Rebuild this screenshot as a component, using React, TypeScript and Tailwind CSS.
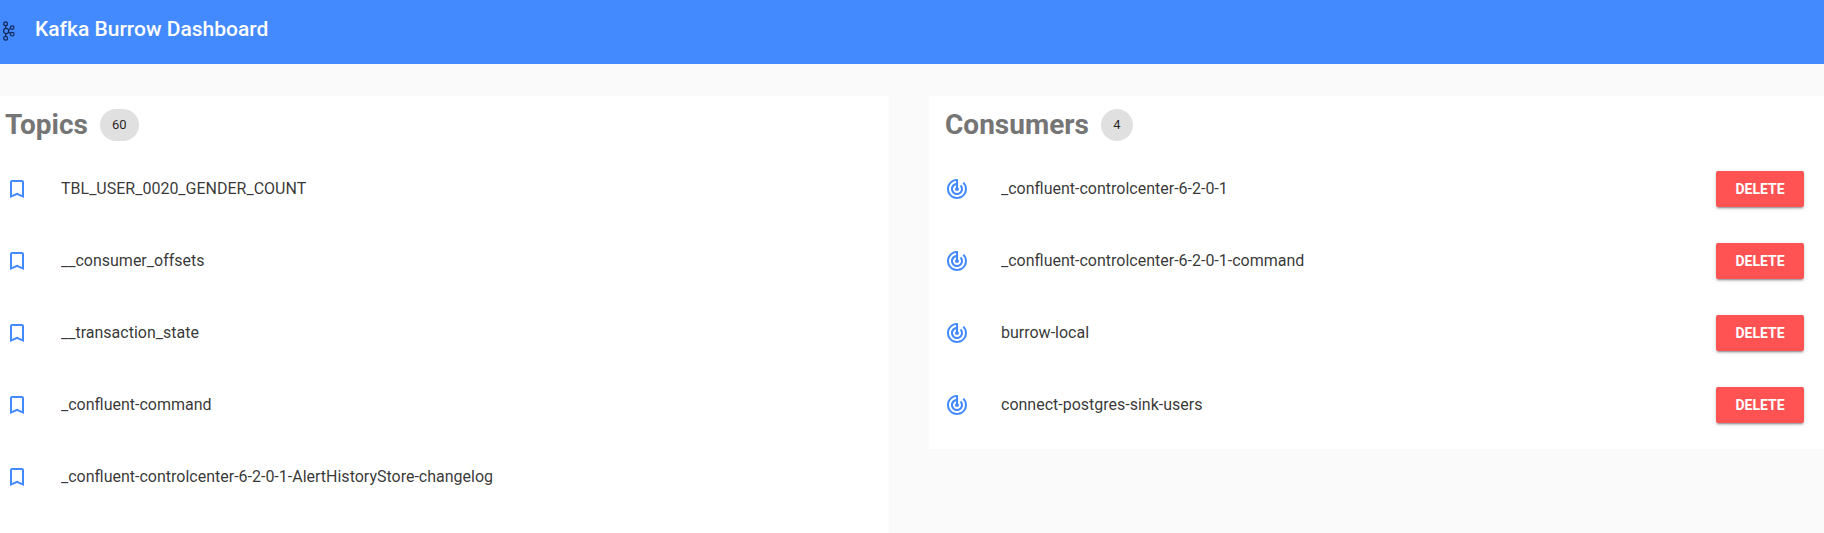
import type { ReactNode } from "react";
import { MdBookmarkBorder, MdTrackChanges } from "react-icons/md";

const TOPICS = [
  "TBL_USER_0020_GENDER_COUNT",
  "__consumer_offsets",
  "__transaction_state",
  "_confluent-command",
  "_confluent-controlcenter-6-2-0-1-AlertHistoryStore-changelog",
];

const CONSUMERS = [
  "_confluent-controlcenter-6-2-0-1",
  "_confluent-controlcenter-6-2-0-1-command",
  "burrow-local",
  "connect-postgres-sink-users",
];

function KafkaLogo() {
  return (
    <svg viewBox="0 0 12 20" className="h-5 w-3 flex-none" fill="none" stroke="#12285a" strokeWidth="1.2" aria-hidden="true">
      <circle cx="2.6" cy="2.8" r="1.9" />
      <circle cx="3.2" cy="10" r="2.6" />
      <circle cx="2.6" cy="17.2" r="1.9" />
      <circle cx="9.2" cy="6.6" r="1.8" />
      <circle cx="9.2" cy="13.2" r="1.8" />
      <path d="M2.7 4.7v2.8M2.7 12.6v2.7M5.4 8.8l2.2-1.3M5.4 11.2l2.2 1.1" />
    </svg>
  );
}

interface PanelHeadingProps {
  title: string;
  count: number;
}

function PanelHeading({ title, count }: PanelHeadingProps) {
  return (
    <div className="flex items-center gap-3">
      <h2 className="text-[28px] leading-8 font-bold text-[#757575]">{title}</h2>
      <span className="flex h-8 min-w-8 items-center justify-center rounded-full bg-[#e0e0e0] px-3 text-[13px]">
        {count}
      </span>
    </div>
  );
}

interface RowProps {
  icon: ReactNode;
  name: string;
  children?: ReactNode;
}

function Row({ icon, name, children }: RowProps) {
  return (
    <li className="flex h-18 items-center">
      <span className="w-14 flex-none text-2xl text-[#448aff]">{icon}</span>
      <span className="flex-1 truncate text-base text-black/80">{name}</span>
      {children}
    </li>
  );
}

export default function App() {
  return (
    <div className="flex min-h-screen flex-col bg-[#fafafa] font-[Roboto,sans-serif] text-black/87">
      <header className="flex h-16 flex-none items-start gap-5 bg-[#448aff] px-[3px] pt-[15px]">
        <div className="flex h-8 items-center">
          <KafkaLogo />
        </div>
        <h1 className="text-[21px] leading-7 font-medium text-white">Kafka Burrow Dashboard</h1>
      </header>

      <main className="grid flex-1 grid-cols-[889fr_895fr] gap-10 pt-8">
        <section className="bg-white pt-[13px] pb-2 pl-[5px]">
          <PanelHeading title="Topics" count={60} />
          <ul className="mt-3">
            {TOPICS.map((topic) => (
              <Row key={topic} icon={<MdBookmarkBorder />} name={topic} />
            ))}
          </ul>
        </section>

        <section className="self-start bg-white pt-[13px] pr-5 pb-2 pl-4">
          <PanelHeading title="Consumers" count={CONSUMERS.length} />
          <ul className="mt-3">
            {CONSUMERS.map((consumer) => (
              <Row key={consumer} icon={<MdTrackChanges />} name={consumer}>
                <button
                  type="button"
                  className="h-9 w-22 rounded-xs bg-[#ff5252] text-sm font-bold text-white uppercase shadow-[0_3px_1px_-2px_rgba(0,0,0,0.2),0_2px_2px_0_rgba(0,0,0,0.14),0_1px_5px_0_rgba(0,0,0,0.12)]"
                >
                  Delete
                </button>
              </Row>
            ))}
          </ul>
        </section>
      </main>
    </div>
  );
}
